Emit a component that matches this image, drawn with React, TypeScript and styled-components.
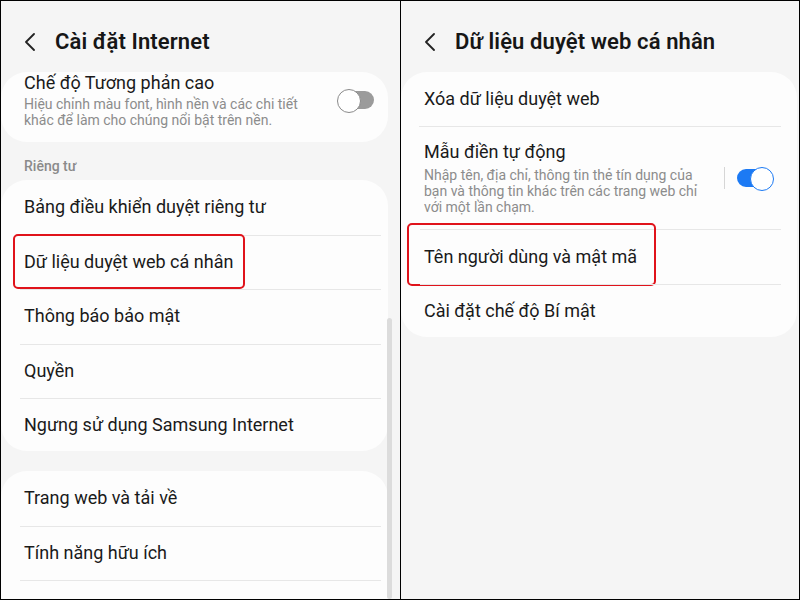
import React from "react";
import styled, { createGlobalStyle } from "styled-components";

const Global = createGlobalStyle`
  html, body { margin: 0; padding: 0; background: #ffffff; }
  * { box-sizing: border-box; }
  body { font-family: Roboto, "Noto Sans", "Liberation Sans", sans-serif; }
`;

const Frame = styled.div`
  width: 800px;
  height: 600px;
  border: 1px solid #000;
  display: flex;
  background: #f5f5f5;
  overflow: hidden;
`;

const Panel = styled.div<{ $divider?: boolean; $w: number }>`
  position: relative;
  width: ${(p) => p.$w}px;
  flex: none;
  height: 100%;
  overflow: hidden;
  display: flex;
  flex-direction: column;
  border-left: ${(p) => (p.$divider ? "1px solid #000" : "none")};
`;

const Header = styled.div`
  height: 71px;
  flex: none;
  display: flex;
  align-items: center;
  padding: 10px 0 0 23px;
  gap: 19px;
`;

const Title = styled.div`
  font-size: 22px;
  font-weight: 600;
  color: #161616;
  line-height: 28px;
  letter-spacing: 0.1px;
`;

const Card = styled.div<{ $mr: number; $mt?: number }>`
  flex: none;
  background: #fdfdfd;
  border-radius: 26px;
  margin: ${(p) => p.$mt ?? 0}px ${(p) => p.$mr}px 0 0;
  display: flex;
  flex-direction: column;
`;

const Row = styled.div<{ $h?: number; $sep?: boolean; $inset: number }>`
  position: relative;
  height: ${(p) => p.$h ?? 54.5}px;
  display: flex;
  align-items: center;
  padding: 0 23px;
  &::before {
    content: "";
    display: ${(p) => (p.$sep ? "block" : "none")};
    position: absolute;
    top: 0;
    left: 19px;
    right: ${(p) => p.$inset}px;
    height: 1px;
    background: #e7e7e7;
  }
`;

const RichRow = styled.div<{ $pt: number; $pb: number; $pr: number; $sep?: boolean; $inset: number }>`
  position: relative;
  display: flex;
  align-items: center;
  padding: ${(p) => p.$pt}px ${(p) => p.$pr}px ${(p) => p.$pb}px 23px;
  &::before {
    content: "";
    display: ${(p) => (p.$sep ? "block" : "none")};
    position: absolute;
    top: 0;
    left: 18px;
    right: ${(p) => p.$inset}px;
    height: 1px;
    background: #e7e7e7;
  }
`;

const TextBlock = styled.div`
  flex: 1;
  display: flex;
  flex-direction: column;
`;

const ItemText = styled.div`
  font-size: 18px;
  line-height: 22px;
  color: #1a1a1a;
`;

const SubText = styled.div<{ $mt: number }>`
  margin-top: ${(p) => p.$mt}px;
  font-size: 14px;
  line-height: 16px;
  color: #8c8c8c;
`;

const SectionLabel = styled.div`
  flex: none;
  height: 38px;
  padding: 16px 0 0 23px;
  font-size: 14px;
  line-height: 16px;
  font-weight: 500;
  color: #8a8a8a;
`;

const Highlight = styled.div<{ $l: number; $t: number; $w: number; $h: number }>`
  position: absolute;
  left: ${(p) => p.$l}px;
  top: ${(p) => p.$t}px;
  width: ${(p) => p.$w}px;
  height: ${(p) => p.$h}px;
  border: 2.5px solid #e0131b;
  border-radius: 5px;
  pointer-events: none;
`;

const Toggle = styled.div<{ $on?: boolean }>`
  position: relative;
  width: 37px;
  height: 22px;
  flex: none;
  &::before {
    content: "";
    position: absolute;
    top: 2px;
    bottom: 2px;
    left: ${(p) => (p.$on ? 0 : 7)}px;
    right: ${(p) => (p.$on ? 7 : 0)}px;
    border-radius: 9px;
    background: ${(p) => (p.$on ? "#1c7af4" : "#9b9b9b")};
  }
  &::after {
    content: "";
    position: absolute;
    top: 0;
    ${(p) => (p.$on ? "right: 0;" : "left: 0;")}
    width: 22px;
    height: 22px;
    border-radius: 50%;
    background: #fff;
    border: 1.6px solid ${(p) => (p.$on ? "#1c7af4" : "#8a8a8a")};
  }
`;

const VLine = styled.div`
  width: 1px;
  height: 22px;
  background: #d6d6d6;
  margin-right: 12px;
  flex: none;
`;

const ScrollThumb = styled.div`
  position: absolute;
  left: 386px;
  top: 317px;
  bottom: 0;
  width: 5px;
  border-radius: 3px;
  background: #dcdcdc;
`;

const Back = () => (
  <svg width="12" height="18" viewBox="0 0 12 18" fill="none">
    <path d="M10 1 L2 9 L10 17" stroke="#222" strokeWidth="1.8" strokeLinecap="round" strokeLinejoin="round" />
  </svg>
);

export default function App() {
  return (
    <>
      <Global />
      <Frame>
        <Panel $w={399}>
          <Header>
            <Back />
            <Title>Cài đặt Internet</Title>
          </Header>
          <Card $mr={12}>
            <RichRow $pt={0} $pb={14} $pr={14} $inset={7}>
              <TextBlock>
                <ItemText>Chế độ Tương phản cao</ItemText>
                <SubText $mt={2}>
                  Hiệu chỉnh màu font, hình nền và các chi tiết
                  <br />
                  khác để làm cho chúng nổi bật trên nền.
                </SubText>
              </TextBlock>
              <Toggle />
            </RichRow>
          </Card>
          <SectionLabel>Riêng tư</SectionLabel>
          <Card $mr={12}>
            <Row $inset={7}>
              <ItemText>Bảng điều khiển duyệt riêng tư</ItemText>
            </Row>
            <Row $sep $inset={7}>
              <ItemText>Dữ liệu duyệt web cá nhân</ItemText>
              <Highlight $l={12} $t={-1} $w={232} $h={55} />
            </Row>
            <Row $sep $inset={7}>
              <ItemText>Thông báo bảo mật</ItemText>
            </Row>
            <Row $sep $inset={7}>
              <ItemText>Quyền</ItemText>
            </Row>
            <Row $sep $inset={7} $h={53}>
              <ItemText>Ngưng sử dụng Samsung Internet</ItemText>
            </Row>
          </Card>
          <Card $mr={12} $mt={20}>
            <Row $inset={7}>
              <ItemText>Trang web và tải về</ItemText>
            </Row>
            <Row $sep $inset={7}>
              <ItemText>Tính năng hữu ích</ItemText>
            </Row>
            <Row $sep $inset={7} />
          </Card>
          <ScrollThumb />
        </Panel>
        <Panel $w={399} $divider>
          <Header>
            <Back />
            <Title>Dữ liệu duyệt web cá nhân</Title>
          </Header>
          <Card $mr={2}>
            <Row $h={54} $inset={16}>
              <ItemText>Xóa dữ liệu duyệt web</ItemText>
            </Row>
            <RichRow $sep $inset={16} $pt={15} $pb={14} $pr={23}>
              <TextBlock>
                <ItemText>Mẫu điền tự động</ItemText>
                <SubText $mt={4}>
                  Nhập tên, địa chỉ, thông tin thẻ tín dụng của
                  <br />
                  bạn và thông tin khác trên các trang web chỉ
                  <br />
                  với một lần chạm.
                </SubText>
              </TextBlock>
              <VLine />
              <Toggle $on />
            </RichRow>
            <Row $sep $inset={16} $h={55}>
              <ItemText>Tên người dùng và mật mã</ItemText>
              <Highlight $l={6} $t={-6} $w={249} $h={63} />
            </Row>
            <Row $sep $inset={16} $h={53}>
              <ItemText>Cài đặt chế độ Bí mật</ItemText>
            </Row>
          </Card>
        </Panel>
      </Frame>
    </>
  );
}
